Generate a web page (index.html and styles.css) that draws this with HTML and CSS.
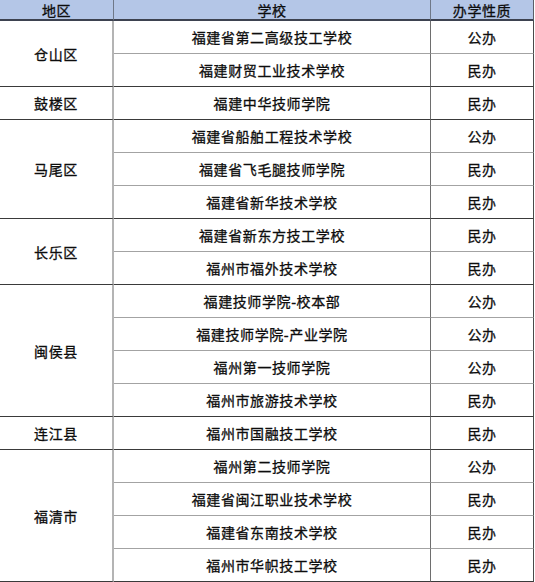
FILE: index.html
```html
<!DOCTYPE html>
<html lang="zh">
<head>
<meta charset="utf-8">
<title>福州技工院校</title>
<link rel="stylesheet" href="styles.css">
</head>
<body>
<table class="schools">
  <colgroup>
    <col class="c-area">
    <col class="c-name">
    <col class="c-type">
  </colgroup>
  <thead>
    <tr class="head">
      <th class="h-area">地区</th>
      <th class="h-name">学校</th>
      <th class="h-type">办学性质</th>
    </tr>
  </thead>
  <tbody>
    <tr><td class="area" rowspan="2">仓山区</td><td class="name">福建省第二高级技工学校</td><td class="type">公办</td></tr>
    <tr class="last"><td class="name">福建财贸工业技术学校</td><td class="type">民办</td></tr>

    <tr class="last"><td class="area">鼓楼区</td><td class="name">福建中华技师学院</td><td class="type">民办</td></tr>

    <tr><td class="area" rowspan="3">马尾区</td><td class="name">福建省船舶工程技术学校</td><td class="type">公办</td></tr>
    <tr><td class="name">福建省飞毛腿技师学院</td><td class="type">民办</td></tr>
    <tr class="last"><td class="name">福建省新华技术学校</td><td class="type">民办</td></tr>

    <tr><td class="area" rowspan="2">长乐区</td><td class="name">福建省新东方技工学校</td><td class="type">民办</td></tr>
    <tr class="last"><td class="name">福州市福外技术学校</td><td class="type">民办</td></tr>

    <tr><td class="area" rowspan="4">闽侯县</td><td class="name">福建技师学院-校本部</td><td class="type">公办</td></tr>
    <tr><td class="name">福建技师学院-产业学院</td><td class="type">公办</td></tr>
    <tr><td class="name">福州第一技师学院</td><td class="type">公办</td></tr>
    <tr class="last"><td class="name">福州市旅游技术学校</td><td class="type">民办</td></tr>

    <tr class="last"><td class="area">连江县</td><td class="name">福州市国融技工学校</td><td class="type">民办</td></tr>

    <tr><td class="area" rowspan="4">福清市</td><td class="name">福州第二技师学院</td><td class="type">公办</td></tr>
    <tr><td class="name">福建省闽江职业技术学校</td><td class="type">民办</td></tr>
    <tr><td class="name">福建省东南技术学校</td><td class="type">民办</td></tr>
    <tr class="last"><td class="name">福州市华帜技工学校</td><td class="type">民办</td></tr>
  </tbody>
</table>
</body>
</html>
```

FILE: styles.css
```css
html, body {
  margin: 0;
  padding: 0;
  background: #ffffff;
}

body {
  font-family: "Noto Sans CJK SC", "Noto Sans", sans-serif;
  color: #0d0d0d;
  font-size: 14px;
}

.schools {
  border-collapse: separate;
  border-spacing: 0;
  table-layout: fixed;
  width: 534px;
}

.c-area { width: 114px; }
.c-name { width: 317px; }
.c-type { width: 103px; }

.schools th,
.schools td {
  padding: 0;
  text-align: center;
  vertical-align: middle;
  font-weight: 400;
  -webkit-text-stroke: 0.3px currentColor;
  letter-spacing: 0.6px;
  line-height: 18px;
}

.head th {
  height: 19px;
  background: #b4c6e7;
  border-bottom: 2px solid #3d4250;
}

.h-area { border-right: 1px solid #6f7888; }
.h-name { border-right: 1px solid #6f7888; }
.h-type { border-right: 1px solid #5a5f68; }

.area {
  border-right: 2px solid #b4b4b4;
  border-bottom: 1px solid #3a3a3a;
  letter-spacing: 1px;
}

.name,
.type {
  height: 32px;
  border-bottom: 1px solid #a3a3a3;
}

.name { border-right: 1px solid #6e6e6e; }
.type { border-right: 1px solid #4a4a4a; }

.last .name,
.last .type {
  border-bottom: 1px solid #3a3a3a;
}
```
